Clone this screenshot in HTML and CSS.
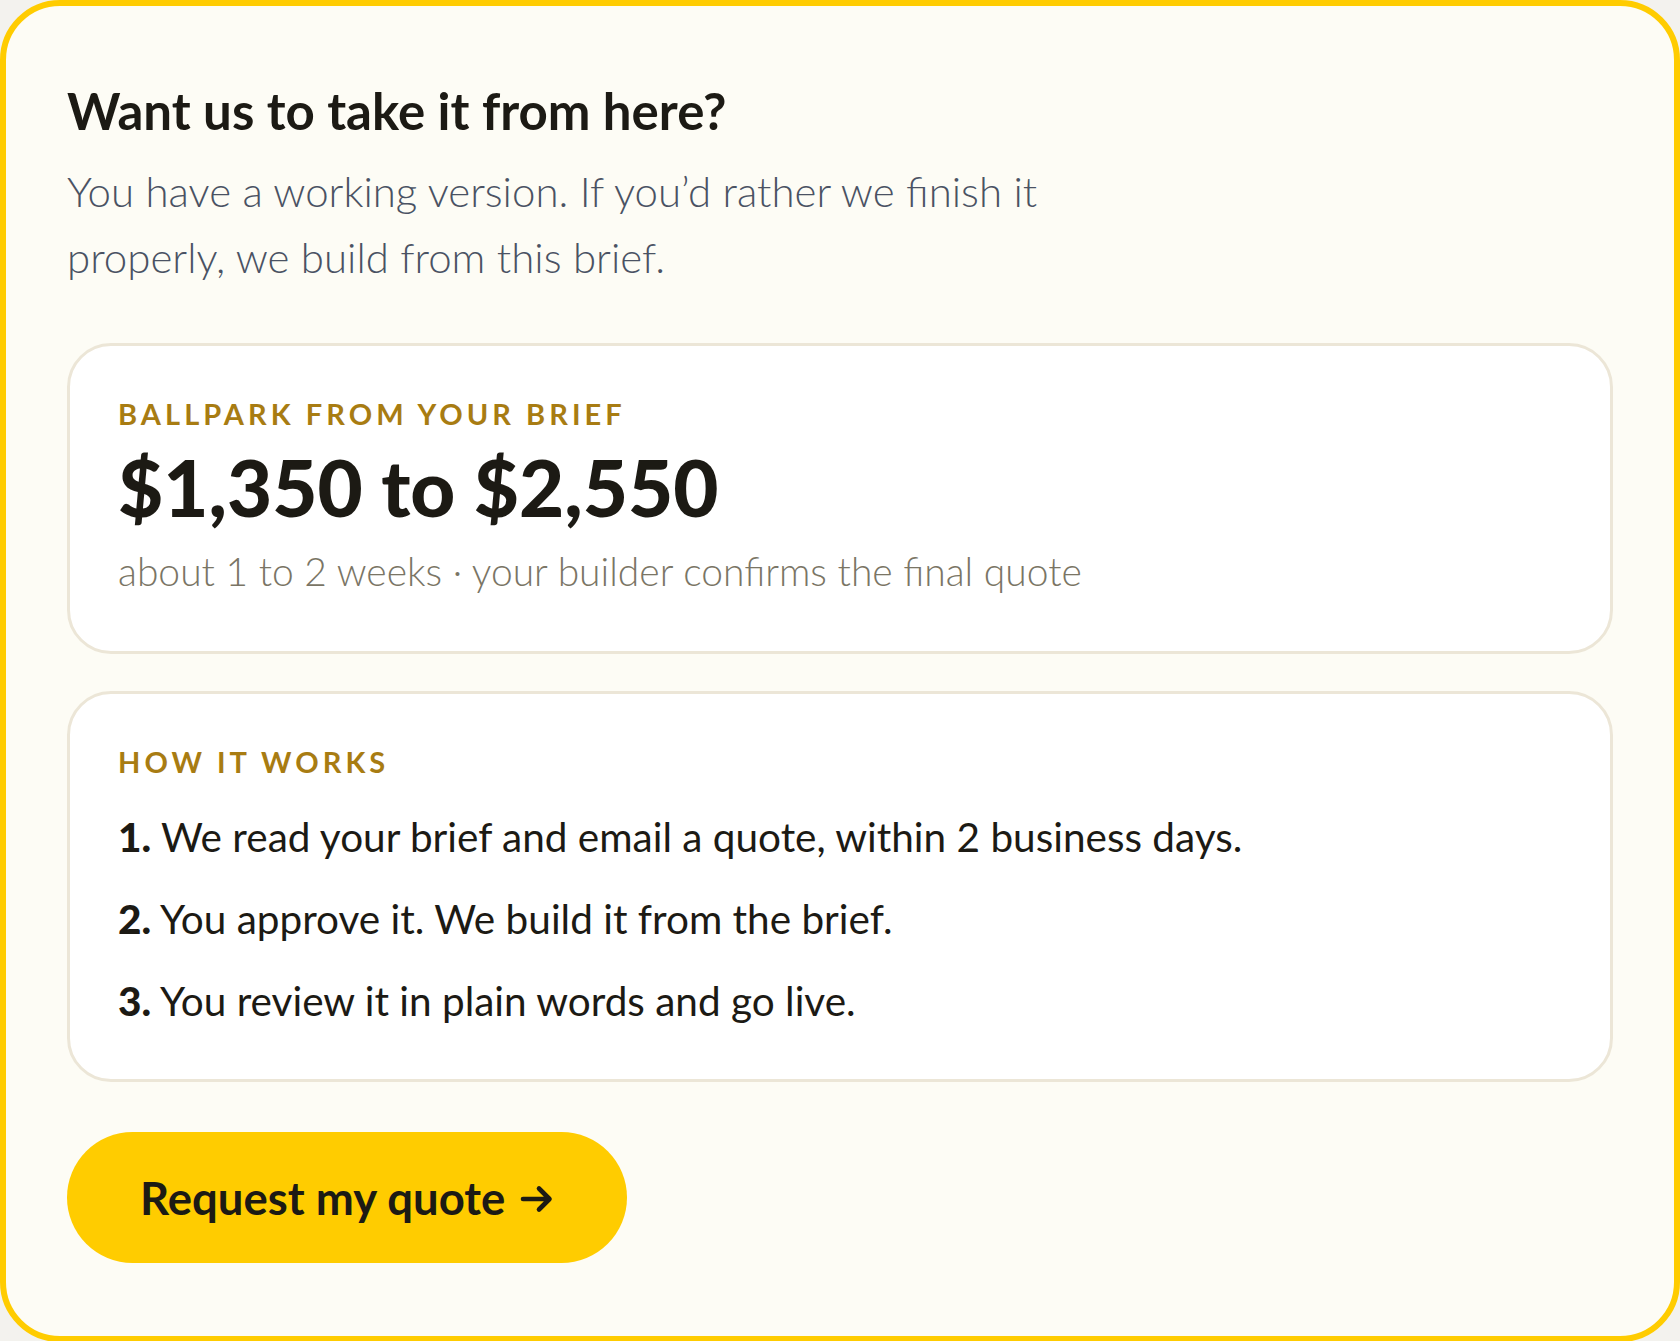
FILE: index.html
```html
<!DOCTYPE html>
<html lang="en">
<head>
  <meta charset="UTF-8">
  <title>Request a quote</title>
  <meta name="viewport" content="width=device-width, initial-scale=1">
  <link rel="stylesheet" href="styles.css">
</head>
<body>
  <section class="handoff">
    <h2 class="handoff-title">Want us to take it from here?</h2>
    <p class="handoff-lead">You have a working version. If you&rsquo;d rather we finish it properly, we build from this brief.</p>

    <div class="panel estimate">
      <div class="eyebrow">Ballpark from your brief</div>
      <div class="estimate-range">$1,350 to $2,550</div>
      <div class="estimate-note">about 1 to 2 weeks &middot; your builder confirms the final quote</div>
    </div>

    <div class="panel steps">
      <div class="eyebrow">How it works</div>
      <ol class="step-list">
        <li><b>1.</b> We read your brief and email a quote, within 2 business days.</li>
        <li><b>2.</b> You approve it. We build it from the brief.</li>
        <li><b>3.</b> You review it in plain words and go live.</li>
      </ol>
    </div>

    <a class="quote-btn" href="#">
      Request my quote
      <svg class="quote-arrow" viewBox="0 0 34 30" width="34" height="30" aria-hidden="true">
        <path d="M3 15h26M19 4.5l10.5 10.5-10.5 10.5" fill="none" stroke="currentColor" stroke-width="4.6" stroke-linecap="round" stroke-linejoin="round"/>
      </svg>
    </a>
  </section>
</body>
</html>
```

FILE: styles.css
```css
html, body {
  margin: 0;
  padding: 0;
  background: #f3f2ee;
}
body {
  font-family: Lato, "Open Sans", sans-serif;
  color: #1c1a14;
}
.handoff {
  box-sizing: border-box;
  min-height: 100vh;
  border: 6px solid #ffcc00;
  border-radius: 60px;
  background: #fdfcf5;
  padding: 74px 61px 73px;
  display: flex;
  flex-direction: column;
  align-items: flex-start;
}
.handoff-title {
  margin: 0;
  font-size: 51px;
  font-weight: 700;
  line-height: 1.2;
  color: #1c1a14;
}
.handoff-lead {
  margin: 17px 0 0;
  max-width: 1060px;
  font-size: 42px;
  font-weight: 300;
  line-height: 66px;
  color: #4a5263;
}

/* white cards */
.panel {
  box-sizing: border-box;
  width: 100%;
  background: #fff;
  border: 3px solid #ece6d7;
  border-radius: 44px;
  padding: 51px 48px 55px;
}
.estimate {
  margin-top: 53px;
}
.steps {
  margin-top: 37px;
  padding-bottom: 37px;
}
.eyebrow {
  font-size: 29px;
  font-weight: 700;
  letter-spacing: 0.14em;
  text-transform: uppercase;
  color: #a87c12;
  line-height: 1.2;
}
.estimate-range {
  margin-top: 13px;
  font-size: 78px;
  font-weight: 900;
  line-height: 1.1;
  color: #1c1a14;
}
.estimate-note {
  margin-top: 15px;
  font-size: 39px;
  font-weight: 300;
  color: #7a7565;
  line-height: 1.3;
}
.step-list {
  list-style: none;
  margin: 16px 0 0;
  padding: 0;
}
.step-list li {
  font-size: 40.5px;
  line-height: 82px;
  color: #1c1a14;
}
.step-list b {
  font-weight: 900;
}

/* call to action */
.quote-btn {
  margin-top: 50px;
  box-sizing: border-box;
  height: 131px;
  display: inline-flex;
  align-items: center;
  gap: 15px;
  background: #ffcc00;
  color: #1c1a14;
  text-decoration: none;
  font-size: 45.5px;
  font-weight: 700;
  padding: 0 73px;
  border-radius: 66px;
}
.quote-arrow {
  flex-shrink: 0;
  margin-top: 2px;
}
```
